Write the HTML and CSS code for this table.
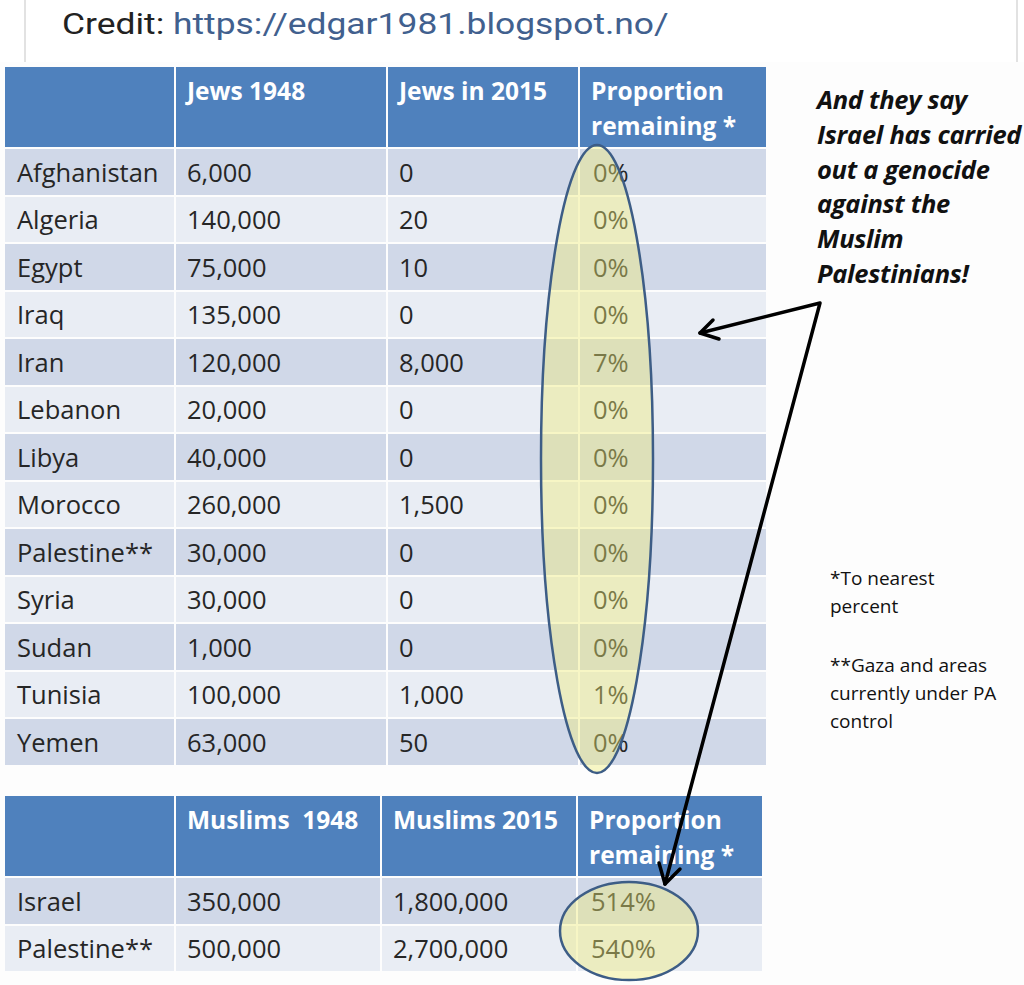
FILE: index.html
```html
<!DOCTYPE html>
<html>
<head>
<meta charset="utf-8">
<link rel="stylesheet" href="styles.css">
</head>
<body>
<div class="page">
  <div class="credit">
    <span class="credit-text"><span class="credit-label">Credit:</span> <a class="credit-link" href="#">https://edgar1981.blogspot.no/</a></span>
  </div>
  <div class="figure">
    <div class="tables">
      <div class="grid grid-jews">
        <div class="th"></div>
        <div class="th">Jews 1948</div>
        <div class="th">Jews in 2015</div>
        <div class="th">Proportion<br>remaining *</div>

        <div class="td odd">Afghanistan</div><div class="td odd">6,000</div><div class="td odd">0</div><div class="td odd pc">0%</div>
        <div class="td even">Algeria</div><div class="td even">140,000</div><div class="td even">20</div><div class="td even pc">0%</div>
        <div class="td odd">Egypt</div><div class="td odd">75,000</div><div class="td odd">10</div><div class="td odd pc">0%</div>
        <div class="td even">Iraq</div><div class="td even">135,000</div><div class="td even">0</div><div class="td even pc">0%</div>
        <div class="td odd">Iran</div><div class="td odd">120,000</div><div class="td odd">8,000</div><div class="td odd pc">7%</div>
        <div class="td even">Lebanon</div><div class="td even">20,000</div><div class="td even">0</div><div class="td even pc">0%</div>
        <div class="td odd">Libya</div><div class="td odd">40,000</div><div class="td odd">0</div><div class="td odd pc">0%</div>
        <div class="td even">Morocco</div><div class="td even">260,000</div><div class="td even">1,500</div><div class="td even pc">0%</div>
        <div class="td odd">Palestine**</div><div class="td odd">30,000</div><div class="td odd">0</div><div class="td odd pc">0%</div>
        <div class="td even">Syria</div><div class="td even">30,000</div><div class="td even">0</div><div class="td even pc">0%</div>
        <div class="td odd">Sudan</div><div class="td odd">1,000</div><div class="td odd">0</div><div class="td odd pc">0%</div>
        <div class="td even">Tunisia</div><div class="td even">100,000</div><div class="td even">1,000</div><div class="td even pc">1%</div>
        <div class="td odd">Yemen</div><div class="td odd">63,000</div><div class="td odd">50</div><div class="td odd pc">0%</div>
      </div>

      <div class="grid grid-muslims">
        <div class="th"></div>
        <div class="th">Muslims&nbsp; 1948</div>
        <div class="th">Muslims 2015</div>
        <div class="th">Proportion<br>remaining *</div>

        <div class="td odd">Israel</div><div class="td odd">350,000</div><div class="td odd">1,800,000</div><div class="td odd pc">514%</div>
        <div class="td even">Palestine**</div><div class="td even">500,000</div><div class="td even">2,700,000</div><div class="td even pc">540%</div>
      </div>
    </div>

    <div class="notes">
      <p class="claim">And they say<br>Israel has carried<br>out a genocide<br>against the<br>Muslim<br>Palestinians!</p>
      <p class="foot">*To nearest<br>percent</p>
      <p class="foot">**Gaza and areas<br>currently under PA<br>control</p>
    </div>

    <svg class="overlay" width="1024" height="985" viewBox="0 0 1024 985" xmlns="http://www.w3.org/2000/svg">
      <ellipse cx="597" cy="459" rx="56" ry="314" fill="rgb(238,236,120)" fill-opacity="0.42" stroke="#3d5d86" stroke-width="2.5"/>
      <ellipse cx="629" cy="931" rx="69" ry="49" fill="rgb(238,236,120)" fill-opacity="0.42" stroke="#3d5d86" stroke-width="2.5"/>
      <g stroke="#000" stroke-width="3.5" fill="none" stroke-linecap="round" stroke-linejoin="round">
        <polyline points="700,333 820,303 665,884"/>
        <polyline points="713,320 700,333 719,339"/>
        <polyline points="659,863 665,884 680,869"/>
      </g>
    </svg>
  </div>
</div>
</body>
</html>
```

FILE: styles.css
```css
html, body {
  margin: 0;
  padding: 0;
  background: #ffffff;
}

.page {
  width: 1024px;
  height: 985px;
  overflow: hidden;
  position: relative;
}

.credit {
  margin-left: 24px;
  width: 994px;
  height: 62px;
  box-sizing: border-box;
  border-left: 2px solid #e2e2e2;
  border-right: 2px solid #e2e2e2;
  padding-left: 36px;
  padding-top: 2px;
  font-family: Roboto, "Liberation Sans", sans-serif;
  font-size: 30px;
  line-height: 44px;
  color: #222;
  white-space: nowrap;
}

.credit-text {
  display: inline-block;
  transform: scaleX(1.18);
  transform-origin: left center;
}

.credit-link {
  color: #41608e;
  text-decoration: none;
}

.figure {
  display: flex;
  padding-top: 5px;
  background: #fdfdfd;
  height: 918px;
}

.tables {
  display: flex;
  flex-direction: column;
  box-sizing: border-box;
  padding-left: 5px;
  width: 766px;
  flex: none;
}

.grid {
  display: grid;
  gap: 2px;
  font-family: "Open Sans", "Noto Sans", sans-serif;
}

.grid-jews {
  grid-template-columns: 169px 210px 190px 186px;
  grid-template-rows: 80px repeat(13, 45.5px);
}

.grid-muslims {
  margin-top: 31.5px;
  grid-template-columns: 169px 204px 194px 184px;
  grid-template-rows: 80px repeat(2, 45.5px);
}

.th {
  background: #4f81bd;
  color: #ffffff;
  font-weight: 700;
  font-size: 24.5px;
  line-height: 35px;
  padding: 6px 0 0 11px;
  white-space: nowrap;
}

.td {
  display: flex;
  align-items: center;
  padding-left: 11px;
  font-size: 25.5px;
  color: #262626;
  white-space: nowrap;
}

.td:nth-child(4n+1) {
  padding-left: 12px;
}

.td.pc {
  padding-left: 13px;
}

.odd {
  background: #d0d8e8;
}

.even {
  background: #e9edf4;
}

.notes {
  padding-left: 51px;
  font-family: "Open Sans", "Noto Sans", sans-serif;
  color: #111;
  white-space: nowrap;
}

.claim {
  margin: 15px 0 0 0;
  font-size: 25.5px;
  font-weight: 700;
  font-style: italic;
  line-height: 34.8px;
  letter-spacing: -0.3px;
}

.foot {
  margin: 0 0 0 13px;
  font-size: 19px;
  line-height: 28px;
}

.claim + .foot {
  margin-top: 273px;
}

.foot + .foot {
  margin-top: 31px;
}

.overlay {
  position: absolute;
  top: 0;
  left: 0;
  pointer-events: none;
}
```
